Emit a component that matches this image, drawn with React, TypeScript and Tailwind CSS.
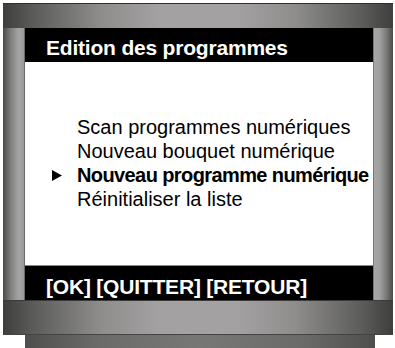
import React from "react";

const items = [
  { label: "Scan programmes numériques", active: false },
  { label: "Nouveau bouquet numérique", active: false },
  { label: "Nouveau programme numérique", active: true },
  { label: "Réinitialiser la liste", active: false },
];

const App = () => {
  return (
    <div
      className="h-[348px] w-[395px] overflow-hidden bg-white"
      style={{ fontFamily: '"Liberation Sans", Arial, sans-serif' }}
    >
      <div className="ml-[3px] mt-[3px] w-[390px]">
        {/* top bar */}
        <div className="h-[25px] border-t border-[#2e2e2c] bg-[linear-gradient(to_right,#3e3e3c,#5c5c5a_8%,#8e8d8c_25%,#a3a1a1_40%,#a3a1a1_60%,#8e8d8c_75%,#5c5c5a_92%,#3e3e3c)]" />
        <div className="flex">
          {/* left pillar */}
          <div className="w-[22px] border-r border-[#6a6a6a] bg-[linear-gradient(to_right,#4a4a48,#7d7d7c_35%,#a4a4a4_75%,#9a9a9a)]" />
          <div className="flex w-[348px] flex-col">
            <div className="flex h-[34px] items-center whitespace-nowrap bg-black pl-[21px] pt-[4px] text-[21px] font-bold leading-none tracking-[-0.2px] text-white">
              Edition des programmes
            </div>
            <div className="flex h-[203px] flex-col bg-white pt-[53px]">
              {items.map((it) => (
                <div
                  key={it.label}
                  className="flex h-[24px] items-center whitespace-nowrap text-[20px] leading-none text-black"
                >
                  <div className="flex w-[52px] shrink-0 justify-end pr-[15px]">
                    {it.active && (
                      <svg width="10" height="11" viewBox="0 0 10 11">
                        <polygon points="0,0 10,5.5 0,11" fill="#000" />
                      </svg>
                    )}
                  </div>
                  <span className={it.active ? "font-bold tracking-[-0.6px]" : ""}>
                    {it.label}
                  </span>
                </div>
              ))}
            </div>
            <div className="flex h-[35px] items-center whitespace-nowrap border-t border-[#888] bg-black pl-[21px] pt-[6px] text-[21px] font-bold leading-none tracking-[-0.2px] text-white">
              [OK] [QUITTER] [RETOUR]
            </div>
          </div>
          {/* right pillar */}
          <div className="w-[20px] border-l border-[#777] bg-[linear-gradient(to_right,#a6a6a6,#a0a0a0_30%,#7a7a79_65%,#4a4a48)]" />
        </div>
        {/* bottom bar */}
        <div className="h-[35px] border-t border-[#3a3a38] border-b border-b-[#444] bg-[linear-gradient(to_right,#3e3e3c,#5c5c5a_8%,#8e8d8c_25%,#a3a1a1_40%,#a3a1a1_60%,#8e8d8c_75%,#5c5c5a_92%,#3e3e3c)]" />
        <div className="ml-[22px] h-[13px] w-[350px] bg-[linear-gradient(to_right,#4e4e4c,#6a6a68_20%,#777775_50%,#6a6a68_80%,#4e4e4c)]" />
      </div>
    </div>
  );
};

export default App;
